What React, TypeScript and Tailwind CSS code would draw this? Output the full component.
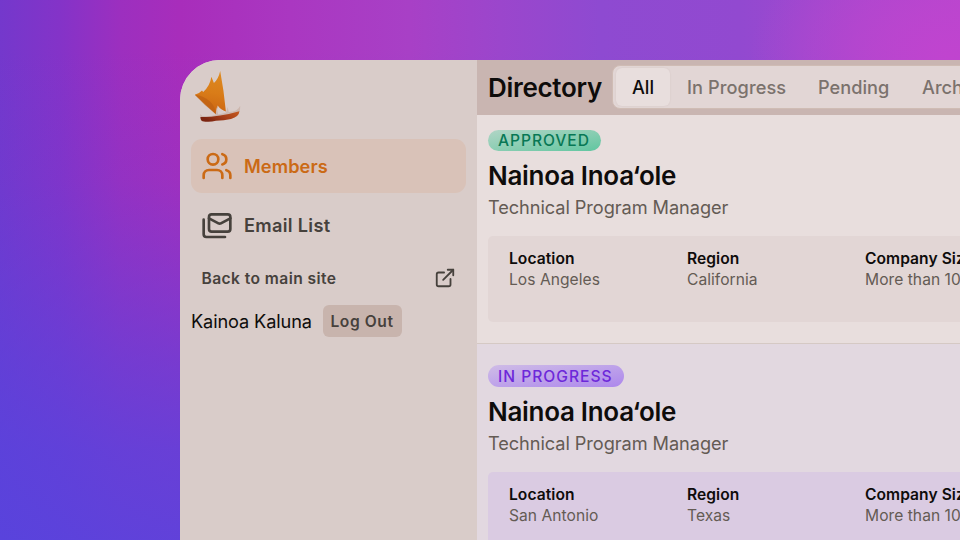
import { ExternalLink, Users } from "lucide-react";

type Member = {
  status: string;
  location: string;
  region: string;
  progress: boolean;
};

const members: Member[] = [
  { status: "APPROVED", location: "Los Angeles", region: "California", progress: false },
  { status: "IN PROGRESS", location: "San Antonio", region: "Texas", progress: true },
];

function Logo() {
  return (
    <svg width="48" height="54" viewBox="0 0 48 54" className="block">
      <defs>
        <linearGradient id="sail" x1="0.6" y1="0" x2="0.5" y2="1">
          <stop offset="0" stopColor="#dd8a20" />
          <stop offset="0.5" stopColor="#d97c18" />
          <stop offset="1" stopColor="#cb6412" />
        </linearGradient>
        <linearGradient id="hull" x1="0" y1="0.4" x2="1" y2="0">
          <stop offset="0" stopColor="#7c2511" />
          <stop offset="0.5" stopColor="#a84018" />
          <stop offset="1" stopColor="#c55a20" />
        </linearGradient>
      </defs>
      <path d="M27.2 1Q30.8 20 32.9 41.5Q28 40 24.6 35.5L23.2 44.5Q14 36 1.8 24.8Q6 24 9 20.6L10.2 22Q17 16 18.4 6.8L20.9 13Q25.4 9 27.2 1Z" fill="url(#sail)" />
      <path d="M1.8 24.8Q11 26 17 31.5Q22 36 23.2 44.5Q12 36 1.8 24.8Z" fill="#bd5f12" opacity="0.7" />
      <path d="M7 44Q9.5 47.6 15 46.4L22.6 45L23.6 37L25.2 44.4L33 42.8L34.6 37L35.8 42Q44.5 42 47.2 35.8Q47.2 41 46 43L20 48.5L8 49Z" fill="#cdb7ae" />
      <path d="M7.4 47Q25 47.4 46.4 41.2Q46.2 46.4 38 49Q31 50.8 23 50.8Q16 52.6 9.5 51.2Q7.4 50.6 7.4 47Z" fill="url(#hull)" />
    </svg>
  );
}

function MailsIcon() {
  return (
    <svg width="32" height="32" viewBox="0 0 24 24" fill="none" stroke="currentColor" strokeWidth="2" strokeLinecap="round" strokeLinejoin="round">
      <rect width="16" height="13" x="6" y="4" rx="2" />
      <path d="m22 7-7.1 3.78c-.57.3-1.23.3-1.8 0L6 7" />
      <path d="M2 8v11c0 1.1.9 2 2 2h14" />
    </svg>
  );
}

function Sidebar() {
  return (
    <aside className="flex w-[297px] shrink-0 flex-col bg-[#d9ccc9] px-[11px] pt-[10px]">
      <div className="ml-[2px] h-[69px]">
        <Logo />
      </div>
      <nav className="flex flex-col gap-[5px] text-[18.2px] font-semibold">
        <a className="flex h-[54px] items-center gap-[11px] rounded-[11px] bg-[#d9c2b8] px-[10px] text-[#cb6a15]">
          <Users size={32} strokeWidth={2} />
          <span className="pt-[2px] tracking-[0.08px]">Members</span>
        </a>
        <a className="flex h-[54px] items-center gap-[11px] px-[10px] text-[#46413c]">
          <MailsIcon />
          <span className="pt-[2px] tracking-[0.3px]">Email List</span>
        </a>
      </nav>
      <a className="mt-[10px] flex h-8 items-center justify-between px-[10.5px] text-[15.6px] font-semibold tracking-[0.43px] text-[#46413c]">
        <span className="pt-[2px]">Back to main site</span>
        <ExternalLink size={22} strokeWidth={2} />
      </a>
      <div className="mt-[11px] flex h-8 items-center">
        <span className="w-[132px] pt-[2px] whitespace-nowrap text-[18.2px] tracking-[-0.13px] text-[#0e0c0b]">Kainoa Kaluna</span>
        <button className="h-8 w-[79px] rounded-[6px] bg-[#c8b4ad] pt-[2px] pr-[1px] text-[15.6px] font-semibold tracking-[0.6px] text-[#46413c]">Log Out</button>
      </div>
    </aside>
  );
}

function Header() {
  return (
    <header className="flex h-[55px] shrink-0 items-center bg-[#c9b5b1] pl-[11px]">
      <h1 className="w-[124px] shrink-0 text-[26px] font-semibold tracking-[-0.3px] text-[#0e0c0b]">Directory</h1>
      <div className="mb-[1px] flex h-[44px] w-[480px] shrink-0 items-center rounded-[8px] border border-[#cfbcb4] bg-[#e2d6d5] pl-[3px] text-[18.2px] font-medium text-[#7b726d]">
        <span className="flex h-[38px] w-[54px] items-center justify-center rounded-[6px] bg-[#e8dedd] pt-[2px] text-[#0e0c0b] shadow-[0_0_2px_rgba(90,50,40,0.08)]">All</span>
        <span className="ml-[17px] w-[131px] pt-[2px] whitespace-nowrap tracking-[0.08px]">In Progress</span>
        <span className="w-[104px] pt-[2px]">Pending</span>
        <span className="pt-[2px]">Archived</span>
      </div>
    </header>
  );
}

function Field({ label, value }: { label: string; value: string }) {
  return (
    <div className="w-[178px] shrink-0 whitespace-nowrap text-[15.6px]">
      <div className="h-[21px] font-semibold leading-[21px] tracking-[0.05px] text-[#0e0c0b]">{label}</div>
      <div className="leading-[22px] tracking-[0.04px] text-[#645b54]">{value}</div>
    </div>
  );
}

function MemberRow({ m }: { m: Member }) {
  return (
    <section className={m.progress ? "h-[230px] shrink-0 bg-[#e2d8e0] pl-[11px] pt-[21px]" : "h-[229px] shrink-0 border-b border-[#d5c9c4] bg-[#e8dedd] pl-[11px] pt-[15px]"}>
      <div
        className={
          m.progress
            ? "flex h-[22px] w-[136px] items-center rounded-full bg-linear-to-br from-[#cfbce6] to-[#ad87ec] pt-[1px] pl-[10px] text-[15.6px] font-medium tracking-[1px] text-[#6d28d9]"
            : "flex h-[21px] w-[113px] items-center rounded-full bg-linear-to-br from-[#b1d5c6] to-[#5ec6a0] pl-[10px] text-[15.6px] font-medium tracking-[0.95px] text-[#087855]"
        }
      >
        {m.status}
      </div>
      <h2 className="mt-[9px] text-[26px] font-semibold leading-8 tracking-[-0.3px] text-[#0e0c0b]">Nainoa Inoa‘ole</h2>
      <p className="mt-[1px] text-[18.2px] leading-7 tracking-[-0.07px] text-[#645b54]">Technical Program Manager</p>
      <div className={m.progress ? "mt-[15px] flex h-[86px] w-[600px] rounded-[5px] bg-[#dacbe2] pl-[21px] pt-[11.5px]" : "mt-[15px] flex h-[86px] w-[600px] rounded-[5px] bg-[#e2d6d5] pl-[21px] pt-[12px]"}>
        <Field label="Location" value={m.location} />
        <Field label="Region" value={m.region} />
        <Field label="Company Size" value="More than 1000" />
      </div>
    </section>
  );
}

export default function App() {
  return (
    <div className="h-[540px] w-[960px] overflow-hidden bg-[radial-gradient(ellipse_200px_130px_at_950px_55px,#c044cf_0%,#c044cf99_40%,#c044cf00_100%),linear-gradient(to_bottom,#5445df00_50px,#5445df20_180px,#5445df50_260px,#5445df90_360px,#5445dfc0_450px,#5445dfd8_540px),linear-gradient(to_right,#7438cc_0px,#8433c8_60px,#9c2fbf_120px,#a82dbb_180px,#aa37c1_290px,#a840c6_410px,#9b46cc_500px,#8e4ad1_600px,#9249d0_740px,#a648ce_860px,#b547ce_960px)] pl-[180px] pt-[60px] font-['Inter',sans-serif]">
      <div className="flex h-[480px] w-[780px] overflow-hidden rounded-tl-[40px] bg-[#e8dedd]">
        <Sidebar />
        <main className="flex w-[483px] shrink-0 flex-col overflow-hidden">
          <Header />
          {members.map((m) => (
            <MemberRow key={m.status} m={m} />
          ))}
        </main>
      </div>
    </div>
  );
}
